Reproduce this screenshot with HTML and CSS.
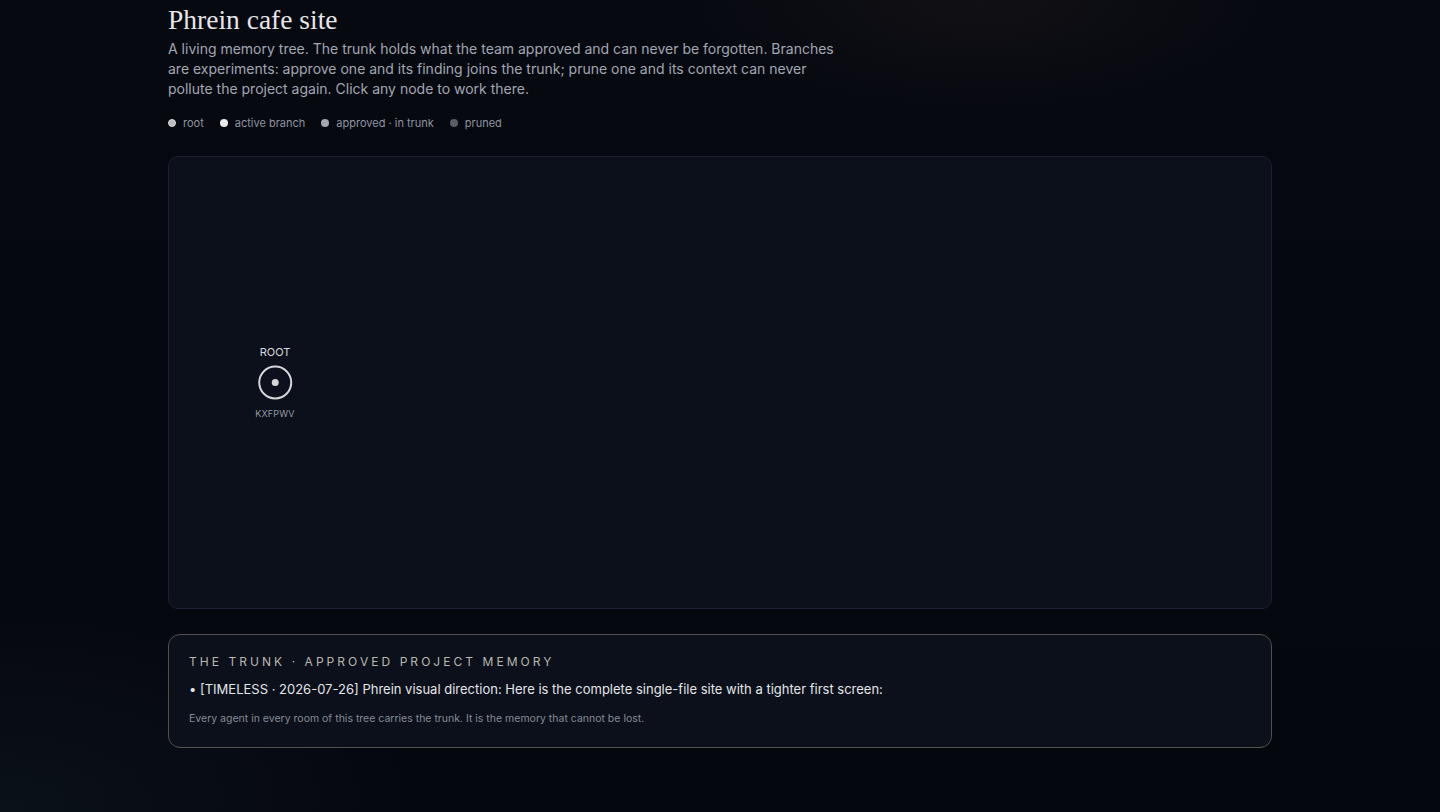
FILE: index.html
```html
<!DOCTYPE html>
<html lang="en">
<head>
  <meta charset="UTF-8">
  <meta name="viewport" content="width=device-width, initial-scale=1.0">
  <title>Phrein cafe site</title>
  <link rel="stylesheet" href="styles.css">
</head>
<body>
  <main class="page">
    <h1>Phrein cafe site</h1>
    <p class="intro">A living memory tree. The trunk holds what the team approved and can never be forgotten. Branches are experiments: approve one and its finding joins the trunk; prune one and its context can never pollute the project again. Click any node to work there.</p>

    <ul class="legend">
      <li><span class="dot dot-root"></span>root</li>
      <li><span class="dot dot-active"></span>active branch</li>
      <li><span class="dot dot-approved"></span>approved · in trunk</li>
      <li><span class="dot dot-pruned"></span>pruned</li>
    </ul>

    <section class="canvas">
      <div class="node node-root">
        <span class="node-label">ROOT</span>
        <svg class="node-ring" width="36" height="36" viewBox="0 0 36 36">
          <circle cx="18" cy="18" r="16" fill="#0c111d" stroke="#d6d6d6" stroke-width="2"/>
          <circle cx="18" cy="18" r="3.5" fill="#d6d6d6"/>
        </svg>
        <span class="node-id">KXFPWV</span>
      </div>
    </section>

    <section class="trunk">
      <h2>The trunk · approved project memory</h2>
      <ul class="trunk-list">
        <li>• [TIMELESS · 2026-07-26] Phrein visual direction: Here is the complete single-file site with a tighter first screen:</li>
      </ul>
      <p class="trunk-note">Every agent in every room of this tree carries the trunk. It is the memory that cannot be lost.</p>
    </section>
  </main>
</body>
</html>
```

FILE: styles.css
```css
html, body {
  height: 100%;
}
body {
  margin: 0;
  font-family: Inter, "Noto Sans", sans-serif;
  color: #e2e4e8;
  background-color: #05070f;
  background-image:
    radial-gradient(ellipse 420px 160px at 68% 0%, rgba(40, 34, 28, 0.3), transparent 70%),
    radial-gradient(ellipse 600px 300px at 0% 100%, rgba(20, 36, 44, 0.35), transparent 70%),
    linear-gradient(180deg, #070911 0%, #060810 60%, #05070f 100%);
}
.page {
  width: 1104px;
  margin: 0 auto;
  padding-top: 4px;
}
h1 {
  margin: 0;
  font-family: "Liberation Serif", "DejaVu Serif", serif;
  font-weight: normal;
  font-size: 27.5px;
  line-height: 32px;
  color: #e6e6e8;
}
.intro {
  margin: 3px 0 0;
  max-width: 680px;
  font-size: 14px;
  line-height: 20px;
  color: #a2a7b1;
}
.legend {
  list-style: none;
  margin: 16px 0 0;
  padding: 0;
  display: flex;
  gap: 16px;
  font-size: 11px;
  line-height: 16px;
  color: #8e94a0;
}
.legend li {
  display: flex;
  align-items: center;
  gap: 7px;
}
.dot {
  width: 8px;
  height: 8px;
  border-radius: 50%;
  box-sizing: border-box;
}
.dot-root {
  background: #b9bcc2;
  border: 1px solid #d8d8d8;
}
.dot-active {
  background: #e9e9ea;
}
.dot-approved {
  background: #a3a7ae;
}
.dot-pruned {
  background: #5a5e67;
}
.canvas {
  position: relative;
  margin-top: 25px;
  height: 453px;
  box-sizing: border-box;
  background: #0b101b;
  border: 1px solid #1b2130;
  border-radius: 10px;
}
.node {
  position: absolute;
  display: flex;
  flex-direction: column;
  align-items: center;
  transform: translate(-50%, -50%);
}
.node-root {
  left: 106px;
  top: 225px;
}
.node-label {
  font-size: 11px;
  line-height: 14px;
  color: #d8dade;
  margin-bottom: 6px;
}
.node-ring {
  display: block;
}
.node-id {
  margin-top: 7px;
  font-size: 9px;
  line-height: 12px;
  color: #969ba5;
  letter-spacing: 0.2px;
}
.trunk {
  margin-top: 25px;
  box-sizing: border-box;
  padding: 19px 20px 20px;
  background: #0b101b;
  border: 1px solid #52514c;
  border-radius: 12px;
}
.trunk h2 {
  margin: 0;
  font-size: 12px;
  line-height: 16px;
  font-weight: 400;
  text-transform: uppercase;
  letter-spacing: 3.05px;
  color: #b9b7b0;
}
.trunk-list {
  list-style: none;
  margin: 9px 0 0;
  padding: 0;
  font-size: 13px;
  line-height: 20px;
  color: #e3e5e9;
}
.trunk-note {
  margin: 12px 0 0;
  font-size: 10.5px;
  line-height: 16px;
  color: #868b95;
}
```
